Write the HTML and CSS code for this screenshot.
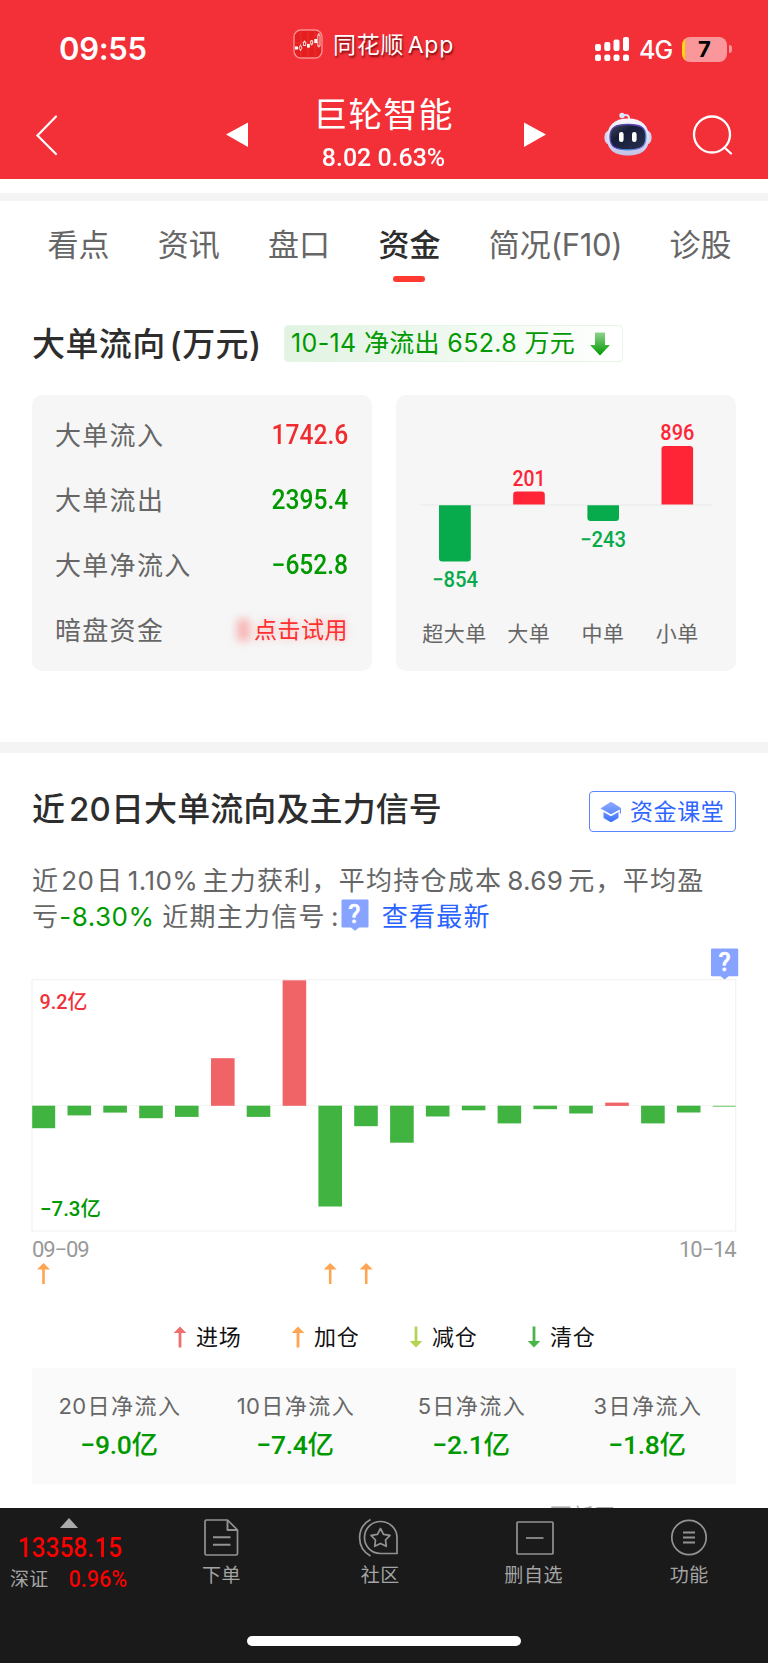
FILE: index.html
```html
<!DOCTYPE html>
<html lang="zh-CN">
<head>
<meta charset="utf-8">
<title>巨轮智能</title>
<link rel="stylesheet" href="styles.css">
</head>
<body>
<div class="app">
  <header class="header">
    <div class="status">
      <div class="clock">09:55</div>
      <div class="brand">
        <svg class="brand-icon" width="30" height="30" viewBox="0 0 30 30">
          <rect x="1" y="1" width="28" height="28" rx="7" fill="#e51f20" stroke="#fb9090" stroke-width="1.4"/>
          <path d="M1 14H29M15 1V29M22 1V29M8 1V29" stroke="#f04141" stroke-width=".5"/>
          <rect x="2" y="17.500" width="3" height="3" fill="#fff"/>
          <rect x="6.300" y="17" width="2.400" height="3.500" rx="1" fill="none" stroke="#fff" stroke-width=".8"/>
          <path d="M7.500 15.500V17M7.500 20.500V22M11.500 11.500V13M18.700 11V12M18.700 15V16.500M25.800 4V6M25.800 17V18.500" stroke="#fff" stroke-width=".8"/>
          <rect x="10.300" y="13" width="2.400" height="3.500" fill="none" stroke="#fff" stroke-width=".8"/>
          <rect x="14" y="15" width="2.800" height="3.600" fill="#fff"/>
          <rect x="17.700" y="12" width="2" height="3" fill="none" stroke="#fff" stroke-width=".8"/>
          <rect x="21.300" y="10" width="2.800" height="4" fill="#fff"/>
          <rect x="24.800" y="6" width="2.200" height="11" fill="none" stroke="#fff" stroke-width=".8"/>
        </svg>
        <span class="brand-name">同花顺 <span class="brand-app">App</span></span>
      </div>
      <div class="signals">
        <svg width="35" height="26" viewBox="0 0 35 26" fill="#fff">
          <rect x="0" y="8" width="6" height="7" rx="2"/><rect x="9.300" y="6" width="6" height="9" rx="2"/><rect x="18.500" y="3.500" width="6" height="11.500" rx="2"/><rect x="28" y="1" width="6" height="14" rx="2"/>
          <rect x="0" y="18.500" width="6" height="6.500" rx="2"/><rect x="9.300" y="18.500" width="6" height="6.500" rx="2"/><rect x="18.500" y="18.500" width="6" height="6.500" rx="2"/><rect x="28" y="18.500" width="6" height="6.500" rx="2"/>
        </svg>
        <span class="net">4G</span>
        <span class="battery">7</span>
        <span class="nub"></span>
      </div>
    </div>
    <div class="nav">
      <svg class="back" width="24" height="42" viewBox="0 0 24 42" fill="none" stroke="#fff" stroke-width="2.200" stroke-linecap="round"><path d="M21 2.500 2.500 21.500 21 40"/></svg>
      <svg class="prev" width="24" height="28" viewBox="0 0 24 28"><path d="M1 13.500 23 1.500V26Z" fill="#fff"/></svg>
      <div class="stock">
        <div class="stock-name">巨轮智能</div>
        <div class="stock-price din">8.02 0.63%</div>
      </div>
      <svg class="next" width="24" height="28" viewBox="0 0 24 28"><path d="M23 13.500 1 1.500V26Z" fill="#fff"/></svg>
      <svg class="robot" width="50" height="46" viewBox="0 0 50 46">
        <defs>
          <linearGradient id="shell" x1="0" y1="0" x2="0" y2="1"><stop offset="0" stop-color="#f8f8fd"/><stop offset=".6" stop-color="#dcdcf2"/><stop offset="1" stop-color="#c3c1e6"/></linearGradient>
          <linearGradient id="rim" x1="0" y1="0" x2="1" y2="1"><stop offset="0" stop-color="#58448c"/><stop offset=".5" stop-color="#5a3fd0"/><stop offset=".75" stop-color="#4ca3ee"/><stop offset="1" stop-color="#a65cd8"/></linearGradient>
          <linearGradient id="visor" x1="0" y1="0" x2="1" y2="1"><stop offset="0" stop-color="#40475e"/><stop offset=".35" stop-color="#171e38"/><stop offset="1" stop-color="#2a3150"/></linearGradient>
        </defs>
        <path d="M19 4.500C25 2.800 26.500 5 26 9" fill="none" stroke="#e4ddf3" stroke-width="2"/>
        <circle cx="19" cy="4.500" r="2.700" fill="#d9e8fb"/>
        <ellipse cx="5" cy="26.500" rx="3.600" ry="6.500" fill="#d5d3ef"/><ellipse cx="45" cy="26.500" rx="3.600" ry="6.500" fill="#d5d3ef"/>
        <path d="M25 7.500C39 7.500 46 15 46 27 46 40 37 44.500 25 44.500S4 40 4 27C4 15 11 7.500 25 7.500Z" fill="url(#shell)"/>
        <path d="M25 13.500C38 13.500 43 16.500 43 26S38 39 25 39 7 35.500 7 26 12 13.500 25 13.500Z" fill="url(#visor)" stroke="url(#rim)" stroke-width="1.300"/>
        <rect x="16" y="21" width="4.600" height="10" rx="2.200" fill="#fff"/><rect x="29" y="21" width="4.600" height="10" rx="2.200" fill="#fff"/>
      </svg>
      <svg class="search" width="42" height="42" viewBox="0 0 42 42" fill="none" stroke="#fff" stroke-width="2.300" stroke-linecap="round"><circle cx="20" cy="20.500" r="18"/><path d="M32.500 33.500 39 39.500"/></svg>
    </div>
  </header>
  <div class="strip"></div>

  <nav class="tabs">
    <span class="tab">看点</span><span class="tab">资讯</span><span class="tab">盘口</span><span class="tab active">资金</span><span class="tab wide">简况<span class="f10">(F10)</span></span><span class="tab">诊股</span>
  </nav>

  <section class="flow">
    <div class="flow-head">
      <h2 class="title">大单流向<span class="unit">(万元)</span></h2>
      <div class="badge"><span>10-14 净流出 652.8 万元</span>
        <svg width="20" height="24" viewBox="0 0 20 24"><defs><linearGradient id="down" x1="0" y1="0" x2="0" y2="1"><stop offset="0" stop-color="#8fd28f"/><stop offset="1" stop-color="#009900"/></linearGradient></defs><path d="M5.500 .5h9q.5 0 .5.500V13h4.300q.7 0 .2.500L10.500 23q-.5.500-1 0L.5 13.500Q0 13 .7 13H5V1q0-.5.500-.5Z" fill="url(#down)"/></svg>
      </div>
    </div>
    <div class="cards">
      <div class="card list">
        <div class="row"><span>大单流入</span><b class="din red">1742.6</b></div>
        <div class="row"><span>大单流出</span><b class="din green">2395.4</b></div>
        <div class="row"><span>大单净流入</span><b class="din green">−652.8</b></div>
        <div class="row"><span>暗盘资金</span><span class="trial">点击试用</span></div>
      </div>
      <div class="card">
        <svg class="order-chart" width="340" height="276" viewBox="396 395 340 276">
          <path d="M420 504.800H713" stroke="#ececec" stroke-width="1.200"/>
          <path d="M439 505.200h31.800v53q0 3.300-3.300 3.300h-25.200q-3.300 0-3.300-3.300Z" fill="#07ab4b"/>
          <path d="M513.200 504.500v-9.700q0-3.300 3.300-3.300h25q3.300 0 3.300 3.300v9.700Z" fill="#ff2436"/>
          <path d="M587.400 505.200H619v12.500q0 3.300-3.300 3.300h-25q-3.300 0-3.300-3.300Z" fill="#07ab4b"/>
          <path d="M661.500 504.500v-55.200q0-3.300 3.300-3.300h25q3.300 0 3.300 3.300v55.200Z" fill="#ff2436"/>
          <g class="bar-values" text-anchor="middle">
            <text x="455" y="587" fill="#07ab4b" textLength="46" lengthAdjust="spacingAndGlyphs">−854</text><text x="529" y="486" fill="#ff2436" textLength="33" lengthAdjust="spacingAndGlyphs">201</text><text x="603" y="547" fill="#07ab4b" textLength="46" lengthAdjust="spacingAndGlyphs">−243</text><text x="677.300" y="440" fill="#ff2436" textLength="34" lengthAdjust="spacingAndGlyphs">896</text>
          </g>
          <g class="bar-names" text-anchor="middle">
            <text x="454.500" y="640.500">超大单</text><text x="528.800" y="640.500">大单</text><text x="603" y="640.500">中单</text><text x="677.300" y="640.500">小单</text>
          </g>
        </svg>
      </div>
    </div>
  </section>

  <section class="history">
    <div class="history-head">
      <h2 class="title">近<span class="n20">20</span>日大单流向及主力信号</h2>
      <div class="lesson">
        <svg width="22" height="22" viewBox="0 0 22 22"><defs><linearGradient id="hat" x1="0" y1="0" x2="0" y2="1"><stop offset="0" stop-color="#8eabff"/><stop offset="1" stop-color="#3d72ff"/></linearGradient></defs><path d="M10.500 1Q11 .8 11.500 1L21 7v6l-1.200-1V8.500L11.500 13q-.5.200-1 0L.5 7.500ZM3.500 11l7 4q.5.200 1 0l7-4v5.500q0 .5-.5.800l-6.300 3.600q-.7.300-1.400 0L4 17.300q-.5-.3-.5-.8Z" fill="url(#hat)"/></svg>
        <span>资金课堂</span>
      </div>
    </div>
    <div class="summary">
      <div class="line"><span>近</span><span class="num a">20</span><span>日</span><span class="num b">1.10%</span><span>主力获利，平均持仓成本</span><span class="num c">8.69</span><span>元，平均盈</span></div>
      <div class="line"><span>亏</span><span class="num d green">-8.30%</span><span>近期主力信号</span><span class="num colon">:</span>
        <svg class="q" width="28" height="32" viewBox="0 0 28 32"><path d="M1.500.5h25q1 0 1 1v26q0 1-1 1H18l-4 3.200-4-3.200H1.500q-1 0-1-1v-26q0-1 1-1Z" fill="#85a3ff"/><text class="q-mark" x="14" y="23.500" text-anchor="middle">?</text></svg>
        <a class="latest">查看最新</a></div>
    </div>
    <svg class="daily-chart" width="768" height="350" viewBox="0 940 768 350">
      <rect x="32" y="979.700" width="703.700" height="251.300" fill="none" stroke="#f2f2f2" stroke-width="1.200"/>
      <path d="M32 1105.500H735" stroke="#f4f4f4" stroke-width="1"/>
      <g fill="#41b341">
        <rect x="32.200" y="1105.700" width="23" height="22.500"/><rect x="67.500" y="1105.700" width="23.600" height="9.700"/><rect x="103.300" y="1105.700" width="23.600" height="6.900"/><rect x="139.200" y="1105.700" width="23.600" height="12.500"/><rect x="175" y="1105.700" width="23.600" height="11.200"/><rect x="246.700" y="1105.700" width="23.600" height="11.200"/><rect x="318.400" y="1105.700" width="23.600" height="100.800"/><rect x="354.200" y="1105.700" width="23.600" height="20.500"/><rect x="390.100" y="1105.700" width="23.600" height="37"/><rect x="425.900" y="1105.700" width="23.600" height="10.800"/><rect x="461.800" y="1105.700" width="23.600" height="4.600"/><rect x="497.600" y="1105.700" width="23.600" height="17.700"/><rect x="533.400" y="1105.700" width="23.600" height="3.500"/><rect x="569.200" y="1105.700" width="23.600" height="7.800"/><rect x="641.100" y="1105.700" width="23.600" height="17.700"/><rect x="676.900" y="1105.700" width="23.600" height="6.800"/><rect x="712.700" y="1105.700" width="23" height="1.200" fill="#86d186"/>
      </g>
      <g fill="#f06468"><rect x="211" y="1058.200" width="23.600" height="47.600"/><rect x="282.600" y="980.300" width="23.600" height="125.500"/><rect x="605.200" y="1102.600" width="23.600" height="3.300"/></g>
      <text class="scale" x="39.500" y="1009" fill="#f32f38" textLength="48" lengthAdjust="spacingAndGlyphs">9.2<tspan class="cjk">亿</tspan></text>
      <text class="scale" x="40" y="1216" fill="#009900" textLength="61" lengthAdjust="spacingAndGlyphs">−7.3<tspan class="cjk">亿</tspan></text>
      <text class="date" x="32" y="1257" textLength="57.500">09−09</text>
      <text class="date" x="679" y="1257" textLength="57.500">10−14</text>
      <g fill="#ffa450"><path d="M43.500 1263l6.500 6.500h-5.200V1284h-2.600v-14.500H37Z"/><path d="M330.200 1263l6.500 6.500h-5.200V1284h-2.600v-14.500h-5.200Z"/><path d="M366.200 1263l6.500 6.500h-5.200V1284h-2.600v-14.500h-5.200Z"/></g>
      <path d="M712 948.500h25.200q1 0 1 1v25.700q0 1-1 1h-8.600l-4 3.200-4-3.200H712q-1 0-1-1v-25.700q0-1 1-1Z" fill="#85a3ff"/><text class="q-mark" x="724.600" y="971" text-anchor="middle">?</text>
    </svg>
    <div class="legend">
      <span class="key"><svg width="14" height="22" viewBox="0 0 14 22"><path d="M7 .5 13.300 7H8.400v14.500H5.600V7H.7Z" fill="#f06e6e"/></svg>进场</span>
      <span class="key"><svg width="14" height="22" viewBox="0 0 14 22"><path d="M7 .5 13.300 7H8.400v14.500H5.600V7H.7Z" fill="#ffa450"/></svg>加仓</span>
      <span class="key"><svg width="14" height="22" viewBox="0 0 14 22"><path d="M7 21.500.7 15H5.600V.5h2.800V15h4.900Z" fill="#b3d551"/></svg>减仓</span>
      <span class="key"><svg width="14" height="22" viewBox="0 0 14 22"><path d="M7 21.500.7 15H5.600V.5h2.800V15h4.900Z" fill="#4bb54b"/></svg>清仓</span>
    </div>
    <div class="stats">
      <div class="stat"><span class="stat-name"><i>20</i>日净流入</span><span class="stat-value din">−9.0<em>亿</em></span></div>
      <div class="stat"><span class="stat-name"><i>10</i>日净流入</span><span class="stat-value din">−7.4<em>亿</em></span></div>
      <div class="stat"><span class="stat-name"><i>5</i>日净流入</span><span class="stat-value din">−2.1<em>亿</em></span></div>
      <div class="stat"><span class="stat-name"><i>3</i>日净流入</span><span class="stat-value din">−1.8<em>亿</em></span></div>
    </div>
    <div class="updated">更新于2025-10-14</div>
  </section>

  <footer class="bottom">
    <div class="menu">
      <div class="index">
        <span class="caret"></span>
        <span class="index-value din">13358.15</span>
        <div class="index-row"><span>深证</span><span class="index-pct din">0.96%</span></div>
      </div>
      <div class="item order">
        <svg width="40" height="40" viewBox="0 0 40 40" fill="none" stroke="#939393" stroke-width="1.700" stroke-linejoin="round"><path d="M25.500 2H4.500Q3 2 3 3.500V35.500Q3 37 4.500 37H34Q35.500 37 35.500 35.500V12Z"/><path d="M25.500 2V12H35.500M11 19.200H28.500M11 26.800H28.500" stroke-width="1.900"/></svg>
        <span>下单</span>
      </div>
      <div class="item">
        <svg width="46" height="40" viewBox="0 0 46 40" fill="none" stroke="#939393" stroke-width="1.700" stroke-linejoin="round"><path d="M23.500 3.500C32.500 3.500 40 10.500 40 19.500V35.500H23.500C14.500 35.500 7.500 28.500 7.500 19.500S14.500 3.500 23.500 3.500Z"/><path d="M13.500 1.500C-1 9.500-1 30 13.500 38"/><path d="M23.500 10.500 26.500 16.300 33 17.400 28.500 22 29.300 28.300 23.500 25.500 17.700 28.300 18.500 22 14 17.400 20.500 16.300Z"/></svg>
        <span>社区</span>
      </div>
      <div class="item remove">
        <svg width="40" height="40" viewBox="0 0 40 40" fill="none" stroke="#939393" stroke-width="1.700"><rect x="2" y="4" width="36" height="32" rx="1"/><path d="M11 20H28.500"/></svg>
        <span>删自选</span>
      </div>
      <div class="item">
        <svg width="40" height="40" viewBox="0 0 40 40" fill="none" stroke="#939393" stroke-width="1.700"><circle cx="20" cy="19.500" r="17.200"/><path d="M14 14.500H26M14 19.500H26M14 24.500H26" stroke-width="2"/></svg>
        <span>功能</span>
      </div>
    </div>
    <div class="home"></div>
  </footer>
</div>
</body>
</html>
```

FILE: styles.css
```css
* { box-sizing: border-box; }
body { margin: 0; background: #fff; font-family: Inter, "Noto Sans CJK SC", sans-serif; color: #666; }
.app { width: 768px; height: 1663px; display: flex; flex-direction: column; overflow: hidden; background: #fff; }
svg { display: block; flex: none; }
.din { font-family: Roboto, "Noto Sans CJK SC", sans-serif; font-weight: 500; }
.red { color: #f02c2f; }
.green { color: #009900; }

.header { flex: none; height: 179px; background: #f32f38; color: #fff; }
.status { height: 94px; display: flex; align-items: flex-start; }
.clock { width: 293px; padding: 30px 0 0 59px; font-size: 31px; line-height: 38px; font-weight: 600; letter-spacing: -.3px; }
.brand { display: flex; align-items: center; height: 30px; margin-top: 29px; width: 302px; }
.brand-name { padding-top: 2px; margin-left: 10px; font-size: 23px; line-height: 30px; letter-spacing: .8px; text-shadow: 1px 2px 2px rgba(70, 0, 0, .7); white-space: nowrap; }
.brand-app { margin-left: -4px; }
.signals { display: flex; align-items: center; height: 28px; margin-top: 35px; }
.net { margin-left: 9px; padding-top: 2px; width: 43px; font-size: 25px; line-height: 28px; font-weight: 500; letter-spacing: -.8px; }
.battery { width: 45px; height: 25px; border-radius: 8px; background: linear-gradient(90deg, #ffd60a 3px, #f9979b 3px); color: #000; text-align: center; font-size: 22px; font-weight: 700; line-height: 25px; }
.nub { width: 3px; height: 8px; margin-left: 2px; border-radius: 0 3px 3px 0; background: #f9979b; }
.nav { display: flex; align-items: flex-start; height: 85px; }
.back { margin: 20px 0 0 35px; }
.prev { margin: 27px 0 0 166px; }
.stock { width: 274px; padding-right: 5px; text-align: center; }
.stock-name { font-size: 34px; line-height: 42px; letter-spacing: 1.100px; font-weight: 400; }
.stock-price { font-size: 26.500px; line-height: 32px; margin-top: 5px; transform: scaleX(.94); }
.next { margin-top: 27px; }
.robot { margin: 17px 0 0 56px; }
.search { margin: 20px 0 0 39px; }
.strip { flex: none; height: 22px; border-top: 14px solid #fff; background: #f4f4f4; }

.tabs { flex: none; display: flex; padding: 21px 0 0 47.500px; height: 103px; font-size: 31px; line-height: 46px; }
.tab { flex: none; width: 62px; margin-right: 48.300px; white-space: nowrap; }
.tab.wide { width: 132.500px; }
.f10 { letter-spacing: -.3px; }
.tab.active { color: #2d2d2d; font-weight: 500; height: 60px; display: flex; flex-direction: column; align-items: center; }
.tab.active::after { content: ""; width: 32px; height: 6px; margin-top: 8px; border-radius: 3px; background: #ff3a31; }

.flow { flex: none; height: 449px; padding: 21px 32px 0; border-bottom: 11px solid #f4f4f4; }
.flow-head { display: flex; height: 37px; align-items: center; }
.title { margin: 0; font-size: 33px; font-weight: 500; line-height: 40px; letter-spacing: .4px; color: #2d2d2d; white-space: nowrap; }
.unit { margin-left: 4px; }
.flow-head .title { width: 252px; }
.badge { width: 339px; height: 37px; display: flex; align-items: center; justify-content: space-between; padding: 0 12px 0 6px; border: 1px solid #e6f5e6; border-radius: 4px; background: linear-gradient(90deg, #e1f3e2, #fff); color: #009900; font-size: 25px; letter-spacing: .35px; white-space: nowrap; line-height: 35px; }
.cards { display: flex; gap: 24px; margin-top: 33px; }
.card { width: 340px; height: 276px; border-radius: 10px; background: #f6f6f6; }
.list { padding: 8px 24px 0 23px; }
.row { display: flex; justify-content: space-between; height: 65px; line-height: 65px; font-size: 26px; letter-spacing: 1.300px; }
.row b { font-size: 27px; letter-spacing: 0; transform: scaleX(.91); transform-origin: right; }
.row .trial { position: relative; font-size: 23px; letter-spacing: .5px; color: #ff3030; text-shadow: 0 0 8px rgba(255, 60, 60, .35); }
.trial::before { content: ""; position: absolute; left: -17px; top: 21px; width: 13px; height: 22px; background: rgba(255, 60, 60, .35); filter: blur(4px); }
.bar-values { font: 500 21.500px Roboto, sans-serif; }
.bar-names { font: 400 21px "Noto Sans CJK SC", sans-serif; letter-spacing: .5px; fill: #666; }

.history { flex: none; height: 755px; overflow: hidden; }
.history-head { display: flex; justify-content: space-between; align-items: flex-start; padding: 38px 32px 0; height: 109px; }
.history-head .title { line-height: 36px; letter-spacing: .1px; }
.n20 { margin: 0 0 0 4px; }
.lesson { width: 147px; height: 41px; display: flex; align-items: center; padding-left: 10px; gap: 8px; border: 1.500px solid #5b86ff; border-radius: 4px; color: #2e66ff; font-size: 23px; letter-spacing: .6px; line-height: 38px; white-space: nowrap; }
.summary { height: 78px; padding: 0 32px; font-size: 26px; letter-spacing: 1.250px; }
.line { display: flex; height: 36px; line-height: 37px; white-space: nowrap; }
.num { flex: none; letter-spacing: .4px; }
.a { width: 37px; text-align: center; }
.b { width: 79px; text-align: center; }
.c { width: 66px; text-align: center; }
.d { width: 103px; letter-spacing: .5px; }
.colon { width: 13px; text-align: right; }
.q { margin: 1px 0 0 2px; }
.q-mark { font: 500 25px Roboto, sans-serif; fill: #fff; stroke: #fff; stroke-width: .4px; }
.latest { margin-left: 13px; color: #2a63ff; }
.scale, .date { font: 500 20.500px Roboto, sans-serif; }
.cjk { font-family: "Noto Sans CJK SC", sans-serif; }
.date { font-weight: 400; fill: #999; font-size: 22px; }
.legend { display: flex; padding-left: 173px; height: 78px; align-items: flex-start; font-size: 22px; line-height: 32px; color: #111; letter-spacing: .7px; padding-top: 31px; }
.key { display: flex; align-items: center; width: 118px; gap: 9px; }
.stats { margin: 0 32px; height: 116px; display: flex; background: #fafafa; }
.stat { width: 176px; display: flex; flex-direction: column; align-items: center; padding-top: 21px; }
.stat-name { font-size: 22px; line-height: 34px; letter-spacing: 1.500px; white-space: nowrap; }
.stat-name i { font-style: normal; margin-right: 1px; letter-spacing: .3px; }
.stat-value { font-size: 26.500px; line-height: 36px; margin-top: 4px; color: #009900; letter-spacing: -.3px; transform: translateX(-1px); }
.stat-value em { font-style: normal; }
.updated { margin: 16px 32px 0; text-align: right; font-size: 22px; line-height: 32px; color: #aaa; }

.bottom { flex: none; height: 155px; background: #1a1a1a; color: #a4a4a4; }
.menu { display: flex; height: 128px; }
.index { width: 140px; }
.caret { display: block; margin: 10px 0 0 60px; width: 0; border: 9px solid transparent; border-top: 0; border-bottom: 10px solid #aaa; }
.index-value { display: block; color: #f00; font-size: 27px; line-height: 34px; margin: 3px 0 0 18px; transform: scaleX(.91); transform-origin: left; }
.index-row { display: flex; gap: 20px; padding-left: 10px; font-size: 19px; line-height: 27px; letter-spacing: .3px; margin-top: 1px; }
.index-pct { color: #f00; font-size: 23.500px; letter-spacing: 0; transform: scaleX(.92); transform-origin: left; }
.item { flex: none; width: 154.500px; display: flex; flex-direction: column; align-items: center; padding-top: 10px; font-size: 19px; line-height: 28px; letter-spacing: .6px; }
.item span { margin-top: 4px; }
.item.order { width: 163px; }
.item.remove span { margin-right: 2px; }
.home { width: 274px; height: 10px; margin: 0 auto; border-radius: 5px; background: #fff; }
```
